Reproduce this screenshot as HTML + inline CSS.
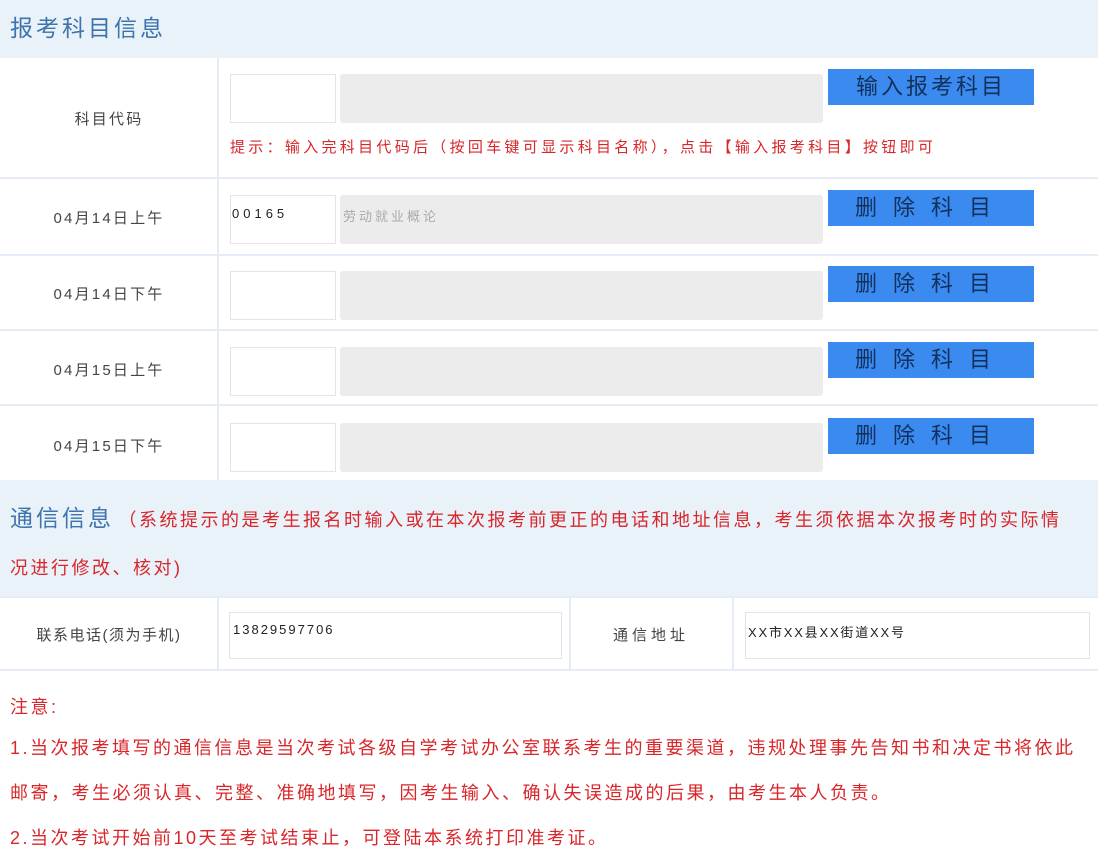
<!DOCTYPE html>
<html><head><meta charset="utf-8"><style>
body{margin:0;width:1106px;height:848px;overflow:hidden;background:#fff;font-family:"Liberation Sans","Noto Sans CJK SC",sans-serif;position:relative}
.a{position:absolute}
.hd{left:0;width:1098px;background:#e9f1f9}
.hl{left:0;width:1098px;height:2px;background:#e6ecf5}
.vl{width:2px;background:#e6ecf5}
.lab{left:0;width:218px;text-align:center;font-size:15px;color:#444;letter-spacing:2.2px}
.in{background:#fff;border:1px solid #e4e4e4;box-sizing:border-box}
.gr{background:#ececec;border-radius:3px}
.btn{left:828px;width:206px;height:36px;background:#3a8af0;color:#12305a;font-size:22px;text-align:center;line-height:36px;letter-spacing:3px}
.red{color:#d8262a;font-size:18px;letter-spacing:2.5px;white-space:nowrap}
</style></head><body>
<div class="a hd" style="top:0;height:58px"></div>
<div class="a" style="left:10px;top:9px;font-size:23px;color:#3d74ad;letter-spacing:3px">报考科目信息</div>
<div class="a vl" style="left:217px;top:58px;height:422px"></div>
<div class="a hl" style="top:177px"></div>
<div class="a hl" style="top:254px"></div>
<div class="a hl" style="top:329px"></div>
<div class="a hl" style="top:404px"></div>
<div class="a lab" style="top:108px">科目代码</div>
<div class="a in" style="left:230px;top:74px;width:106px;height:49px"></div>
<div class="a gr" style="left:340px;top:74px;width:483px;height:49px"></div>
<div class="a btn" style="top:69px">输入报考科目</div>
<div class="a" style="left:230px;top:136px;font-size:15px;letter-spacing:3.3px;color:#d8262a;white-space:nowrap">提示：输入完科目代码后（按回车键可显示科目名称），点击【输入报考科目】按钮即可</div>

<div class="a lab" style="top:207px">04月14日上午</div>
<div class="a in" style="left:230px;top:195px;width:106px;height:49px"></div>
<div class="a gr" style="left:340px;top:195px;width:483px;height:49px"></div>
<div class="a" style="left:232px;top:206px;font-size:13px;color:#222;letter-spacing:4px">00165</div>
<div class="a" style="left:343px;top:206px;font-size:13px;color:#aaa;letter-spacing:3px">劳动就业概论</div>
<div class="a btn" style="top:190px;letter-spacing:16px;text-indent:0px">删除科目</div>

<div class="a lab" style="top:283px">04月14日下午</div>
<div class="a in" style="left:230px;top:271px;width:106px;height:49px"></div>
<div class="a gr" style="left:340px;top:271px;width:483px;height:49px"></div>
<div class="a btn" style="top:266px;letter-spacing:16px">删除科目</div>

<div class="a lab" style="top:359px">04月15日上午</div>
<div class="a in" style="left:230px;top:347px;width:106px;height:49px"></div>
<div class="a gr" style="left:340px;top:347px;width:483px;height:49px"></div>
<div class="a btn" style="top:342px;letter-spacing:16px">删除科目</div>

<div class="a lab" style="top:435px">04月15日下午</div>
<div class="a in" style="left:230px;top:423px;width:106px;height:49px"></div>
<div class="a gr" style="left:340px;top:423px;width:483px;height:49px"></div>
<div class="a btn" style="top:418px;letter-spacing:16px">删除科目</div>

<div class="a hd" style="top:480px;height:116px"></div>
<div class="a" style="left:10px;top:495px;width:1092px;line-height:47px;white-space:nowrap"><span style="font-size:23px;color:#3d74ad;letter-spacing:3px">通信信息</span> <span class="red">（系统提示的是考生报名时输入或在本次报考前更正的电话和地址信息，考生须依据本次报考时的实际情</span><br><span class="red">况进行修改、核对)</span></div>
<div class="a hl" style="top:596px"></div>
<div class="a hl" style="top:669px"></div>
<div class="a vl" style="left:217px;top:597px;height:72px"></div>
<div class="a vl" style="left:569px;top:597px;height:72px"></div>
<div class="a vl" style="left:732px;top:597px;height:72px"></div>
<div class="a lab" style="top:624px;letter-spacing:1.5px">联系电话(须为手机)</div>
<div class="a in" style="left:229px;top:612px;width:333px;height:47px"></div>
<div class="a" style="left:233px;top:622px;font-size:13px;color:#222;letter-spacing:2px">13829597706</div>
<div class="a" style="left:570px;width:162px;text-align:center;top:624px;font-size:15px;color:#444;letter-spacing:4px">通信地址</div>
<div class="a in" style="left:745px;top:612px;width:345px;height:47px"></div>
<div class="a" style="left:748px;top:622px;font-size:13px;color:#222;letter-spacing:1.8px">XX市XX县XX街道XX号</div>

<div class="a red" style="left:10px;top:693px">注意:</div>
<div class="a red" style="left:10px;top:726px;width:1092px;line-height:45px">1.当次报考填写的通信信息是当次考试各级自学考试办公室联系考生的重要渠道，违规处理事先告知书和决定书将依此<br>邮寄，考生必须认真、完整、准确地填写，因考生输入、确认失误造成的后果，由考生本人负责。<br>2.当次考试开始前10天至考试结束止，可登陆本系统打印准考证。</div>
</body></html>
